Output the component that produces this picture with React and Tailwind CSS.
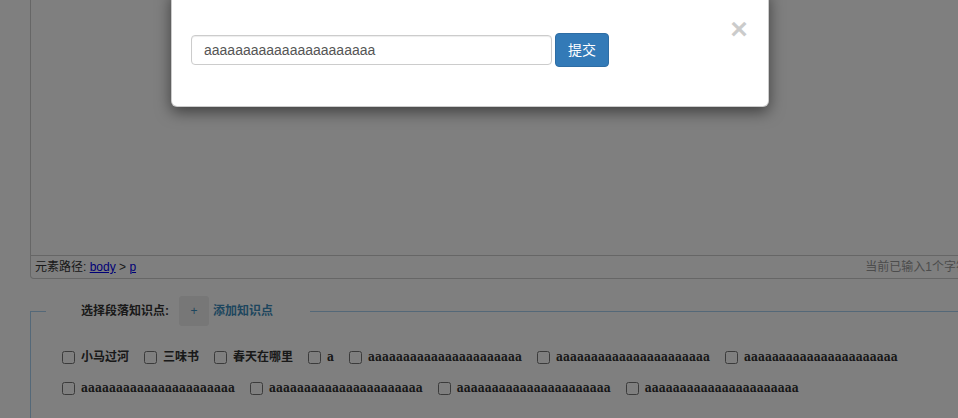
import React from 'react';

const sans = { fontFamily: '"Liberation Sans", "Noto Sans CJK SC", sans-serif' };

const topics = [
  '小马过河',
  '三味书',
  '春天在哪里',
  'a',
  'aaaaaaaaaaaaaaaaaaaaaa',
  'aaaaaaaaaaaaaaaaaaaaaa',
  'aaaaaaaaaaaaaaaaaaaaaa',
  'aaaaaaaaaaaaaaaaaaaaaa',
  'aaaaaaaaaaaaaaaaaaaaaa',
  'aaaaaaaaaaaaaaaaaaaaaa',
  'aaaaaaaaaaaaaaaaaaaaaa',
];

function Editor() {
  return (
    <div className="w-[943px] h-[279px] flex flex-col border-x border-b border-[#ccc] rounded-b-[4px]">
      <div className="flex-1" />
      <div className="h-[23px] flex items-center justify-between border-t border-[#ccc] pl-[4px] pr-[4px] text-[12px] text-[#333]">
        <div>
          元素路径: <a href="#" className="text-[#0000ee] underline">body</a> &gt; <a href="#" className="text-[#0000ee] underline">p</a>
        </div>
        <div className="text-[#999] whitespace-nowrap">当前已输入1个字符</div>
      </div>
    </div>
  );
}

function TopicPicker() {
  return (
    <fieldset className="mt-[17px] w-[960px] border border-[#a9d1f0] px-0 pt-0 pb-[20px]">
      <legend className="ml-[15px]">
        <div className="flex items-center h-[30px] pl-[35px] pr-[37px] text-[12px] font-bold">
          <span className="text-[#333]">选择段落知识点:</span>
          <span className="ml-[10px] w-[30px] h-[30px] rounded-[3px] bg-[#eeeeee] flex items-center justify-center text-[#3c8dbc] font-normal">+</span>
          <span className="ml-[4px] text-[#3c8dbc]">添加知识点</span>
        </div>
      </legend>
      <div className="pl-[31px] pt-[21px] w-[911px] flex flex-wrap gap-x-[15px] gap-y-[11px]">
        {topics.map((t, i) => (
          <label key={i} className="h-[20px] flex items-center gap-[6px] text-[12px] font-bold text-[#333]" style={{ fontFamily: '"DejaVu Serif Condensed", "Noto Sans CJK SC", serif' }}>
            <input type="checkbox" className="m-0 w-[13px] h-[13px]" />
            <span>{t}</span>
          </label>
        ))}
      </div>
    </fieldset>
  );
}

function Modal() {
  return (
    <div className="absolute left-[171px] top-[-10px] w-[598px] bg-white border border-black/20 rounded-[6px] shadow-[0_5px_15px_rgba(0,0,0,0.5)] pl-[19px] pt-[42px] pb-[39px]">
      <span className="absolute top-[28px] right-[19px] w-[20px] h-[20px] flex items-center justify-center text-[30px] font-bold leading-none text-black opacity-20">×</span>
      <div className="flex items-center">
        <input
          type="text"
          defaultValue="aaaaaaaaaaaaaaaaaaaaaa"
          className="w-[361px] h-[30px] px-3 border border-[#ccc] rounded-[4px] text-[14px] text-[#555] shadow-[inset_0_1px_1px_rgba(0,0,0,0.075)] outline-none"
        />
        <button className="ml-[3px] h-[34px] px-3 bg-[#337ab7] border border-[#2e6da4] rounded-[4px] text-white text-[14px]">提交</button>
      </div>
    </div>
  );
}

export default function App() {
  return (
    <div className="relative w-[958px] h-[418px] overflow-hidden bg-white" style={sans}>
      <div className="pl-[30px]">
        <Editor />
        <TopicPicker />
      </div>
      <div className="absolute inset-0 bg-black/50" />
      <Modal />
    </div>
  );
}
